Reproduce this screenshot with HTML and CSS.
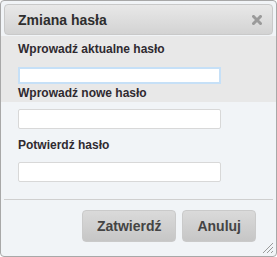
FILE: index.html
```html
<!DOCTYPE html>
<html lang="pl">
<head>
    <meta charset="UTF-8">
    <meta name="viewport" content="width=device-width, initial-scale=1.0">
    <title>Zmiana hasła</title>
    <link rel="stylesheet" href="styles.css">
</head>
<body>
    <div class="dialog">
        <div class="titlebar">
            <span class="title">Zmiana hasła</span>
            <svg class="close" width="10" height="10" viewBox="0 0 10 10">
                <path d="M1.5 1.5 L8.5 8.5 M8.5 1.5 L1.5 8.5" stroke="#9a9a9a" stroke-width="3" stroke-linecap="square"/>
            </svg>
        </div>
        <div class="content">
            <div class="band">
                <label class="label">Wprowadź aktualne hasło</label>
                <input class="field focused" type="password" autofocus>
                <label class="label">Wprowadź nowe hasło</label>
            </div>
            <input class="field first" type="password">
            <label class="label">Potwierdź hasło</label>
            <input class="field" type="password">
        </div>
        <div class="buttonpane">
            <button class="btn">Zatwierdź</button>
            <button class="btn">Anuluj</button>
        </div>
        <svg class="grip" width="12" height="12" viewBox="0 0 12 12">
            <path d="M11 1 L1 11 M11 5 L5 11 M11 9 L9 11" stroke="#9a9a9a" stroke-width="1"/>
        </svg>
    </div>
</body>
</html>
```

FILE: styles.css
```css
body {
    margin: 0;
    background: #fff;
    font-family: "Liberation Sans", Arial, sans-serif;
}

.dialog {
    position: relative;
    width: 277px;
    height: 257px;
    box-sizing: border-box;
    border: 1px solid #a8a8a8;
    border-radius: 4px;
    background: #f1f4f7;
    padding-top: 3px;
}

.titlebar {
    display: flex;
    justify-content: space-between;
    align-items: center;
    height: 31px;
    box-sizing: border-box;
    margin: 0 3px;
    padding: 0 10px 0 13px;
    border: 1px solid #c9c9c9;
    border-radius: 4px;
    background: linear-gradient(#e8e8e8, #d3d3d3);
}

.title {
    font-size: 14px;
    font-weight: bold;
    color: #2e2e2e;
}

.close {
    display: block;
}

.content {
    display: flex;
    flex-direction: column;
}

.band {
    display: flex;
    flex-direction: column;
    background: #e8e8e8;
    padding: 6px 0 2px 17px;
    margin-top: 1px;
}

.label {
    font-size: 12px;
    line-height: 14px;
    font-weight: bold;
    color: #2f2a30;
}

.band .label + .field {
    margin-top: 11px;
}

.band .field + .label {
    margin-top: 2px;
}

.field {
    width: 203px;
    height: 20px;
    box-sizing: border-box;
    border: 1px solid #d8d8d8;
    border-radius: 2px;
    background: #fff;
    margin: 10px 0 0 17px;
    padding: 0 2px;
    outline: none;
    caret-color: #000;
}

.field.first {
    margin-top: 7px;
}

.content > .label {
    margin: 9px 0 0 17px;
}

.band .field {
    margin-left: 0;
    height: 17px;
    border: 2px solid #c6e0f7;
    border-radius: 0;
}

.buttonpane {
    display: flex;
    justify-content: flex-end;
    gap: 6px;
    margin: 17px 3px 0;
    padding: 10px 17px 0 0;
    border-top: 1px solid #cfcfcf;
}

.btn {
    height: 32px;
    padding: 0 14px;
    border: 1px solid #cacaca;
    border-radius: 4px;
    background: linear-gradient(#dadada, #c6c6c6);
    font-family: "Liberation Sans", Arial, sans-serif;
    font-size: 14px;
    font-weight: bold;
    color: #444;
}

.grip {
    position: absolute;
    right: 2px;
    bottom: 2px;
}
```
